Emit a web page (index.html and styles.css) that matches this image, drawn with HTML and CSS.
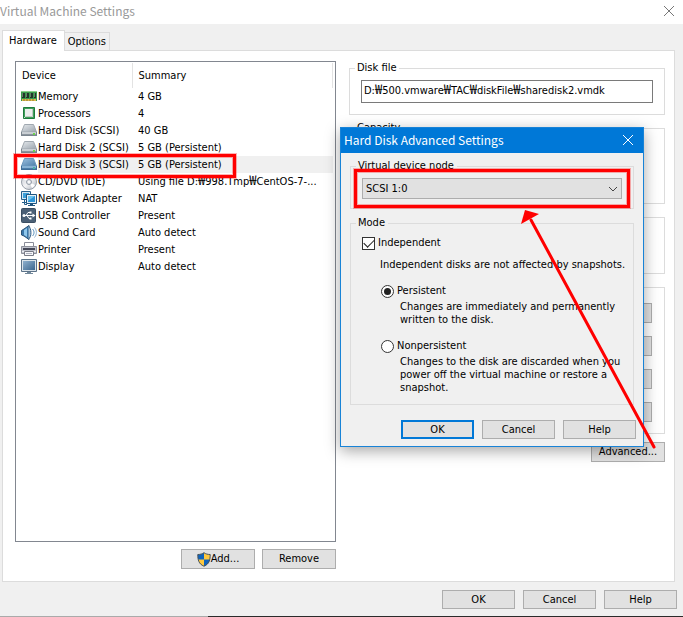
FILE: index.html
```html
<!DOCTYPE html>
<html lang="en">
<head>
<meta charset="utf-8">
<title>Virtual Machine Settings</title>
<link rel="stylesheet" href="styles.css">
</head>
<body>
<svg class="defs" width="0" height="0" aria-hidden="true">
  <defs>
    <linearGradient id="gDisk" x1="0" y1="0" x2="1" y2="1"><stop offset="0" stop-color="#e6eaed"/><stop offset="1" stop-color="#9aa3ad"/></linearGradient>
    <linearGradient id="gDiskSel" x1="0" y1="0" x2="1" y2="1"><stop offset="0" stop-color="#9dc2e0"/><stop offset="1" stop-color="#4a7ba8"/></linearGradient>
    <linearGradient id="gScreen" x1="0" y1="0" x2="1" y2="1"><stop offset="0" stop-color="#8fb0cd"/><stop offset="1" stop-color="#3d678f"/></linearGradient>
    <linearGradient id="gCd" x1="0" y1="0" x2="1" y2="1"><stop offset="0" stop-color="#c3c9d2"/><stop offset=".5" stop-color="#f3f3f5"/><stop offset="1" stop-color="#a9b0ba"/></linearGradient>
    <symbol id="disk" viewBox="0 0 16 16"><path d="M3.500 1.500h9l3 7.500H.5z" fill="url(#gDisk)" stroke="#a0a8b0"/><path d="M0 9h16v4H0z" fill="#7b858f"/><path d="M1 9h14v2H1z" fill="#c9ced3"/><path d="M1 11h14v1H1z" fill="#8c959e"/><path d="M12 10h2v2h-2z" fill="#6cd04c"/></symbol>
  </defs>
</svg>
<main class="window">
  <header class="titlebar">
    <h1>Virtual Machine Settings</h1>
    <button class="close" type="button" aria-label="Close"><svg width="12" height="12" viewBox="0 0 12 12"><path d="M1 1l10 10M11 1L1 11" stroke="#777" fill="none"/></svg></button>
  </header>
  <nav class="tabs" role="tablist">
    <button class="tab active" type="button" role="tab" aria-selected="true">Hardware</button>
    <button class="tab" type="button" role="tab" aria-selected="false">Options</button>
  </nav>
  <section class="panel">
    <div class="devices">
      <div class="list">
        <table>
          <thead><tr><th>Device</th><th>Summary</th></tr></thead>
          <tbody>
            <tr><td><span class="dev"><svg width="16" height="16" viewBox="0 0 16 16"><path d="M0 2h16v10H0z" fill="#3a9a4c"/><path d="M0 2h16v1H0z" fill="#8ccf8a"/><path d="M1 4h3v5H1zM5 4h3v5H5zM9 4h3v5H9zM13 4h2v5h-2z" fill="#23352a"/><path d="M1 4h1v4H1zM5 4h1v4H5zM9 4h1v4H9zM13 4h1v4h-1z" fill="#66806a"/><path d="M1 10h14v2H1z" fill="#e0b84d"/><path d="M3 10v2M6 10v2M9 10v2M12 10v2" stroke="#8a7a30"/></svg><span>Memory</span></span></td><td>4 GB</td></tr>
            <tr><td><span class="dev"><svg width="16" height="16" viewBox="0 0 16 16"><path d="M2.500 1.500h11v11h-11z" fill="#3f9f5a" stroke="#1f7a3c"/><path d="M4 3h8v8H4z" fill="#eceeed"/><path d="M4 10.500h7.500V3" stroke="#c0c8c3" fill="none"/><path d="M3 12l2-2" stroke="#c7e6ce"/></svg><span>Processors</span></span></td><td>4</td></tr>
            <tr><td><span class="dev"><svg width="16" height="16"><use href="#disk"/></svg><span>Hard Disk (SCSI)</span></span></td><td>40 GB</td></tr>
            <tr><td><span class="dev"><svg width="16" height="16"><use href="#disk"/></svg><span>Hard Disk 2 (SCSI)</span></span></td><td>5 GB (Persistent)</td></tr>
            <tr class="selected"><td><span class="dev"><svg width="16" height="16" viewBox="0 0 16 16"><path d="M3.500 1.500h9l3 7.500H.5z" fill="url(#gDiskSel)" stroke="#6b98bf"/><path d="M0 9h16v4H0z" fill="#3f6e98"/><path d="M1 9h14v2H1z" fill="#88b2d4"/><path d="M1 11h14v1H1z" fill="#4d7eaa"/><path d="M12 10h2v2h-2z" fill="#4bb0a5"/></svg><span>Hard Disk 3 (SCSI)</span></span></td><td>5 GB (Persistent)</td></tr>
            <tr><td><span class="dev"><svg width="16" height="16" viewBox="0 0 16 16"><circle cx="8" cy="8" r="7.500" fill="url(#gCd)" stroke="#9aa1ab"/><path d="M8 8L2 5a7 7 0 0 1 3-3z" fill="#fff"/><path d="M8 8l6 3a7 7 0 0 1-3 3z" fill="#fff"/><circle cx="8" cy="8" r="2.500" fill="#e4e7eb" stroke="#959da8"/><circle cx="8" cy="8" r="1" fill="#fff"/></svg><span>CD/DVD (IDE)</span></span></td><td>Using file D:<span class="won">₩</span>998.Tmp<span class="won">₩</span>CentOS-7-...</td></tr>
            <tr><td><span class="dev"><svg width="16" height="16" viewBox="0 0 16 16"><path d="M.5 .5h9v8h-9z" fill="#d5e8f4" stroke="#26618d"/><path d="M2 2h6v5H2z" fill="#3ba0da"/><path d="M3.500 9v4.500H6M1 11.500h4" stroke="#26618d" fill="none"/><path d="M5.500 3.500h10v9h-10z" fill="#e5f1f8" stroke="#1e5480"/><path d="M7 5h7v6H7z" fill="#2d95d8"/><path d="M7 5h7l-7 5z" fill="#6bc2ee"/><path d="M9 13h3v1h2v1H7v-1h2z" fill="#1e5480"/></svg><span>Network Adapter</span></span></td><td>NAT</td></tr>
            <tr><td><span class="dev"><svg width="16" height="16" viewBox="0 0 16 16"><rect x=".5" y=".5" width="14" height="14" rx="1" fill="#4b6076" stroke="#3b4e62"/><path d="M3 7.500h10M5 7.500l2-3h2M6 7.500l2 3h2" stroke="#fff" fill="none"/><circle cx="3" cy="7.500" r="1.500" fill="#fff"/><path d="M11.500 5.500l3 2-3 2z" fill="#fff"/><path d="M8.500 3.500h2v2h-2zM8.500 9.500h2v2h-2z" fill="#fff"/></svg><span>USB Controller</span></span></td><td>Present</td></tr>
            <tr><td><span class="dev"><svg width="16" height="16" viewBox="0 0 16 16"><path d="M.5 5.500L3 4l5-3.500v14L3 11 .5 10z" fill="#3b78ab" stroke="#2b5276"/><path d="M3 5l3-2v9l-3-2z" fill="#8fc7ec"/><path d="M7.500 1c3 2 3.500 11 0 13" fill="#a9c7dd" stroke="#345f85"/><path d="M11.500 4c2 2 2 5 0 7" fill="none" stroke="#4c87b5"/><path d="M13.500 2.500c2.500 3 2.500 7 0 10" fill="none" stroke="#8bb0cf"/></svg><span>Sound Card</span></span></td><td>Auto detect</td></tr>
            <tr><td><span class="dev"><svg width="16" height="16" viewBox="0 0 16 16"><path d="M3.500 .5h9v5h-9z" fill="#fff" stroke="#8a8d99"/><path d="M.5 4.500h15v7H.5z" fill="#c2c5cf" stroke="#8d909b"/><path d="M2 6h12v2H2z" fill="#454857"/><path d="M1 9.500h14" stroke="#eceef2"/><path d="M3.500 9.500h9v4h-9z" fill="#f7f7fa" stroke="#787b87"/><path d="M5 11.500h6" stroke="#b0b3c0"/></svg><span>Printer</span></span></td><td>Present</td></tr>
            <tr><td><span class="dev"><svg width="16" height="16" viewBox="0 0 16 16"><path d="M.5 .5h15v12H.5z" fill="#dce4ea" stroke="#5c7288"/><path d="M2 2h12v9H2z" fill="url(#gScreen)"/><path d="M6 13h4v1h2v1H4v-1h2z" fill="#71879a"/></svg><span>Display</span></span></td><td>Auto detect</td></tr>
          </tbody>
        </table>
      </div>
      <div class="actions">
        <button class="btn" type="button"><svg width="14" height="15" viewBox="0 0 14 15"><path d="M7 .7C5.500 2 3 2.500.8 2.500c0 5 .7 9.500 6.200 11.700 5.500-2.200 6.200-6.700 6.200-11.700C11 2.500 8.500 2 7 .7z" fill="#ffc83d"/><path d="M7 .7C5.500 2 3 2.500.8 2.500c0 2 .1 3.500.4 5H7zM7 7.500h5.800c-.7 3-2.300 5.500-5.800 6.700z" fill="#0f63bd"/><path d="M7 .7C5.500 2 3 2.500.8 2.500c0 5 .7 9.500 6.200 11.700 5.500-2.200 6.200-6.700 6.200-11.700C11 2.500 8.500 2 7 .7z" fill="none" stroke="#46525c"/></svg>Add...</button>
        <button class="btn" type="button">Remove</button>
      </div>
    </div>
    <div class="details">
      <fieldset class="group">
        <legend>Disk file</legend>
        <div class="path" role="textbox" aria-readonly="true" aria-label="Disk file" tabindex="0">D:<span class="won">₩</span>500.vmware<span class="won">₩</span>TAC<span class="won">₩</span>diskFile<span class="won">₩</span>sharedisk2.vmdk</div>
      </fieldset>
      <fieldset class="group capacity"><legend>Capacity</legend></fieldset>
      <fieldset class="group info" aria-label="Disk information"></fieldset>
      <fieldset class="group utilities" aria-label="Disk utilities">
        <button class="btn" type="button" aria-label="Map"></button>
        <button class="btn" type="button" aria-label="Defragment"></button>
        <button class="btn" type="button" aria-label="Expand"></button>
        <button class="btn" type="button" aria-label="Compact"></button>
      </fieldset>
      <button class="btn advanced" type="button">Advanced...</button>
    </div>
  </section>
  <footer class="footer">
    <button class="btn" type="button">OK</button>
    <button class="btn" type="button">Cancel</button>
    <button class="btn" type="button">Help</button>
  </footer>
</main>

<section class="dialog" role="dialog" aria-labelledby="dialog-title">
  <header class="dialog-title">
    <h2 id="dialog-title">Hard Disk Advanced Settings</h2>
    <button class="close" type="button" aria-label="Close"><svg width="12" height="12" viewBox="0 0 12 12"><path d="M1 1l10 10M11 1L1 11" stroke="#fff" fill="none"/></svg></button>
  </header>
  <div class="dialog-body">
    <fieldset class="group node">
      <legend><label for="node">Virtual device node</label></legend>
      <div class="select"><select id="node"><option>SCSI 1:0</option></select><svg width="10" height="6" viewBox="0 0 10 6"><path d="M1 1l4 4 4-4" fill="none" stroke="#444"/></svg></div>
    </fieldset>
    <fieldset class="group mode">
      <legend>Mode</legend>
      <label class="option"><input type="checkbox" checked>Independent</label>
      <p class="note">Independent disks are not affected by snapshots.</p>
      <label class="option nested"><input type="radio" name="mode" checked>Persistent</label>
      <p class="desc">Changes are immediately and permanently<br>written to the disk.</p>
      <label class="option nested"><input type="radio" name="mode">Nonpersistent</label>
      <p class="desc">Changes to the disk are discarded when you<br>power off the virtual machine or restore a<br>snapshot.</p>
    </fieldset>
    <div class="dialog-actions">
      <button class="btn default" type="button">OK</button>
      <button class="btn" type="button">Cancel</button>
      <button class="btn" type="button">Help</button>
    </div>
  </div>
</section>

<svg class="marks" width="683" height="617" viewBox="0 0 683 617" aria-hidden="true">
  <g fill="none" stroke="#f00" stroke-opacity=".3" stroke-width="5"><path d="M15.500 155.500h219v21h-219zM355.500 170.500h273v36h-273z"/></g>
  <g fill="none" stroke="#f00" stroke-width="3"><path d="M15.500 155.500h219v21h-219zM355.500 170.500h273v36h-273z"/><path d="M531 220L654 447" stroke-linecap="round"/></g>
  <path d="M525 210l14 4-18 10z" fill="#f00"/>
</svg>
</body>
</html>
```
FILE: styles.css
```css
* { box-sizing: border-box; }

body {
  margin: 0;
  background: #f0f0f0;
  color: #000;
  font: 11px/14px "DejaVu Sans Condensed", "Noto Sans", sans-serif;
}

button, select, input { font: inherit; color: inherit; margin: 0; }
h1, h2, p { margin: 0; font-weight: normal; }
svg { display: block; flex: none; }
.defs { position: absolute; }

.window {
  display: flex;
  flex-direction: column;
  min-height: 100vh;
  border-bottom: 1px solid #2b2b2b;
  border-image: linear-gradient(90deg, #aaa 208px, #2b2b2b 208px) 1;
}

.titlebar {
  display: flex;
  justify-content: space-between;
  align-items: center;
  height: 24px;
  padding: 0 8px 2px 0;
  background: #fff;
}

h1, h2 {
  font: 12px/18px "Noto Sans CJK KR", "Noto Sans", sans-serif;
}
h1 { color: #999; }

.close {
  display: flex;
  padding: 0;
  border: 0;
  background: none;
}

.tabs {
  display: flex;
  align-items: flex-end;
  padding: 6px 0 0 2px;
}
.tab {
  height: 18px;
  padding: 1px 3px 0;
  border: 1px solid #dcdcdc;
  border-width: 1px 1px 0 0;
  background: #f0f0f0;
}
.tab.active {
  height: 21px;
  margin-bottom: -1px;
  padding: 0 7px 1px 6px;
  border-left-width: 1px;
  background: #fff;
  position: relative;
}

.panel {
  flex: 1;
  display: grid;
  grid-template-columns: 321fr 316fr;
  gap: 13px;
  margin: 0 8px 0 2px;
  padding: 10px 9px 12px 12px;
  border: 1px solid #dcdcdc;
  background: #fff;
}

.devices { display: flex; flex-direction: column; gap: 7px; }

.list {
  flex: 1;
  padding: 1px 2px 1px 5px;
  border: 1px solid #828790;
}
.list table {
  width: 100%;
  border-collapse: collapse;
  table-layout: fixed;
}
.list th {
  height: 25px;
  padding: 0 0 0 1px;
  text-align: left;
  font-weight: normal;
  border-right: 1px solid #e3e3e3;
}
.list th:first-child { width: 111px; }
.list th:last-child { padding-left: 6px; }
.list td { height: 17px; padding: 0; white-space: nowrap; }
.list td:last-child { padding-left: 6px; }
.dev { display: flex; align-items: center; gap: 1px; height: 17px; }
.selected td:last-child, .selected .dev span { background: #f0f0f0; }
.selected .dev span { flex: 1; line-height: 17px; }
.won { font: 13px/12px "Noto Sans CJK KR", sans-serif; }

.btn {
  display: flex;
  justify-content: center;
  align-items: center;
  width: 74px;
  height: 20px;
  padding: 0;
  border: 1px solid #adadad;
  background: #e1e1e1;
  white-space: nowrap;
}
.btn.default { border: 2px solid #0078d7; }
.actions { display: flex; justify-content: flex-end; gap: 7px; }

.details { display: flex; flex-direction: column; gap: 6px; }

.group {
  min-width: 0;
  margin: 0;
  padding: 5px 11px 11px;
  border: 1px solid #dcdcdc;
}
.group legend { margin-left: -6px; padding: 0 3px 0 2px; }
.capacity { height: 83px; }
.info { height: 57px; margin-top: 7px; }
.utilities {
  display: flex;
  flex-direction: column;
  align-items: flex-end;
  gap: 13px;
  height: 147px;
  margin-top: 7px;
  padding: 15px 12px 0;
}

.path {
  height: 23px;
  padding: 2px;
  border: 1px solid #7a7a7a;
  white-space: nowrap;
  overflow: hidden;
}
.advanced { align-self: flex-end; margin-top: 2px; }

.footer {
  display: flex;
  justify-content: flex-end;
  gap: 8px;
  padding: 8px 6px 7px;
}
.footer .btn, .dialog-actions .btn { width: 73px; height: 19px; }

.dialog {
  position: absolute;
  left: 340px;
  top: 127px;
  width: 304px;
  border: 1px solid #1883d7;
  background: #f0f0f0;
  box-shadow: 0 4px 14px rgba(0, 0, 0, .35);
}
.dialog-title {
  display: flex;
  justify-content: space-between;
  align-items: center;
  height: 25px;
  padding: 0 9px 2px 3px;
  background: #0078d7;
  color: #fff;
}
.dialog-body {
  display: flex;
  flex-direction: column;
  gap: 7px;
  padding: 6px 9px 7px;
}
.node { padding: 5px 11px 9px; }
.mode { padding: 6px 11px 10px; }

.select { display: grid; align-items: center; }
.select > * { grid-area: 1 / 1; }
.select select {
  width: 100%;
  height: 21px;
  padding: 0 3px;
  border: 1px solid #adadad;
  border-radius: 0;
  background: #e1e1e1;
  appearance: none;
}
.select svg { justify-self: end; margin-right: 4px; pointer-events: none; }

.option { display: flex; align-items: center; gap: 3px; height: 14px; }
.nested { margin: 13px 0 2px 19px; }
.option input {
  appearance: none;
  display: grid;
  place-items: center;
  width: 13px;
  height: 13px;
  border: 1px solid #333;
  background: #fff;
}
.option input[type="radio"] { border-radius: 50%; }
.option input[type="radio"]:checked::before {
  content: "";
  width: 7px;
  height: 7px;
  border-radius: 50%;
  background: #222;
}
.option input[type="checkbox"]:checked::before {
  content: "";
  width: 9px;
  height: 5px;
  margin-bottom: 3px;
  border: solid #222;
  border-width: 0 0 1px 1px;
  transform: rotate(-45deg);
}
.note, .desc { line-height: 13px; white-space: nowrap; }
.note { margin: 8px 0 0 18px; }
.desc { margin-left: 38px; }

.dialog-actions {
  display: flex;
  justify-content: flex-end;
  gap: 8px;
  margin: 8px -2px 0;
}

.marks {
  position: absolute;
  left: 0;
  top: 0;
  pointer-events: none;
}
```
